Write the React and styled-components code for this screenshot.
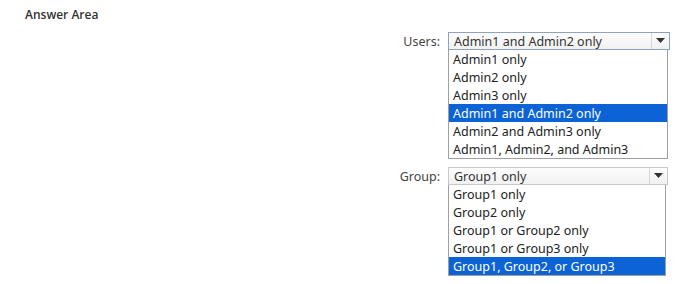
import React from "react";
import styled, { createGlobalStyle } from "styled-components";

const Global = createGlobalStyle`
  html, body { margin: 0; padding: 0; background: #fff; }
  body { font-family: "Noto Sans", "Open Sans", sans-serif; color: #222; }
`;

const Page = styled.div`
  width: 678px;
  height: 284px;
  box-sizing: border-box;
  padding: 7px 0 0 25px;
`;

const Title = styled.div`
  font-family: "Open Sans", "Noto Sans", sans-serif;
  font-size: 12px;
  font-weight: 600;
  color: #333;
  line-height: 16px;
`;

const Form = styled.div`
  margin: 9px 0 0 355px;
  display: grid;
  grid-template-columns: 60px 222px;
  column-gap: 8px;
  row-gap: 8px;
  align-items: start;
`;

const Label = styled.div`
  font-size: 12.5px;
  color: #444;
  text-align: right;
  line-height: 18px;
  padding-top: 1px;
`;

const Field = styled.div`
  display: flex;
  flex-direction: column;
  width: ${(p) => p.$w}px;
`;

const Select = styled.div`
  display: flex;
  height: 18px;
  border: 1px solid ${(p) => p.$border};
  background: linear-gradient(#fdfdfd, #f1f1f1);
  box-sizing: border-box;
  width: ${(p) => p.$w}px;
`;

const Value = styled.div`
  flex: 1;
  font-size: 12.5px;
  line-height: 18px;
  padding-left: 5px;
  color: #333;
  overflow: hidden;
  white-space: nowrap;
`;

const Arrow = styled.div`
  width: 17px;
  border-left: 1px solid #d6d6d6;
  display: flex;
  align-items: center;
  justify-content: center;
`;

const List = styled.div`
  border: 1px solid #a0a0a0;
  border-top: none;
  background: #fff;
  box-sizing: border-box;
  width: ${(p) => p.$w}px;
`;

const Item = styled.div`
  height: 18px;
  line-height: 19px;
  font-size: 12.5px;
  padding-left: 4px;
  white-space: nowrap;
  color: ${(p) => (p.$sel ? "#fff" : "#222")};
  background: ${(p) => (p.$sel ? "#0b63d6" : "transparent")};
`;

const Caret = () => (
  <svg width="9" height="6" viewBox="0 0 9 6">
    <path d="M0 0 H9 L4.5 5 Z" fill="#333" />
  </svg>
);

function Dropdown({ value, options, selected, w, listW, border }) {
  return (
    <Field $w={w}>
      <Select $w={w} $border={border}>
        <Value>{value}</Value>
        <Arrow>
          <Caret />
        </Arrow>
      </Select>
      <List $w={listW}>
        {options.map((o) => (
          <Item key={o} $sel={o === selected}>
            {o}
          </Item>
        ))}
      </List>
    </Field>
  );
}

export default function App() {
  const users = [
    "Admin1 only",
    "Admin2 only",
    "Admin3 only",
    "Admin1 and Admin2 only",
    "Admin2 and Admin3 only",
    "Admin1, Admin2, and Admin3",
  ];
  const groups = [
    "Group1 only",
    "Group2 only",
    "Group1 or Group2 only",
    "Group1 or Group3 only",
    "Group1, Group2, or Group3",
  ];
  return (
    <Page>
      <Global />
      <Title>Answer Area</Title>
      <Form>
        <Label>Users:</Label>
        <Dropdown
          value="Admin1 and Admin2 only"
          options={users}
          selected="Admin1 and Admin2 only"
          w={222}
          listW={220}
          border="#8ea3c0"
        />
        <Label>Group:</Label>
        <Dropdown
          value="Group1 only"
          options={groups}
          selected="Group1, Group2, or Group3"
          w={220}
          listW={218}
          border="#c8c8c8"
        />
      </Form>
    </Page>
  );
}
